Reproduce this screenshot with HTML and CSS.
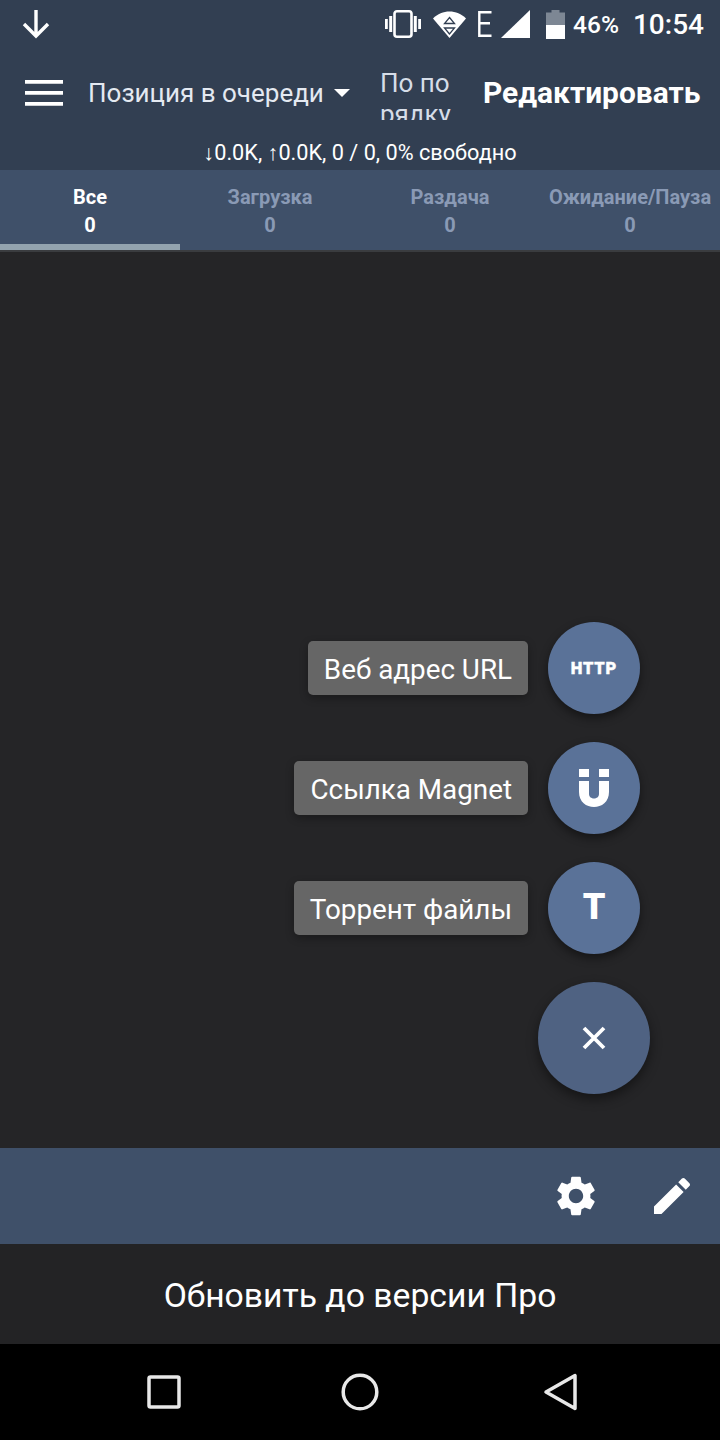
FILE: index.html
```html
<!DOCTYPE html>
<html lang="ru">
<head>
  <meta charset="UTF-8" />
  <meta name="viewport" content="width=device-width, initial-scale=1" />
  <title>Торренты</title>
  <link rel="stylesheet" href="styles.css">
</head>
<body>
  <div class="screen">
    <header class="top">
      <div class="status-bar">
        <svg class="dl-icon" width="32" height="32" viewBox="0 0 32 32"><path d="M16 2V27M4 16L16 28L28 16" fill="none" stroke="#fff" stroke-width="3.400"/></svg>
        <div class="status-right">
          <svg class="st-vibrate" width="36" height="28" viewBox="0 0 36 28"><rect x="9.500" y="1.300" width="17" height="25.400" rx="2.500" fill="none" stroke="#fff" stroke-width="2.600"/><path d="M0 9h2.800v10H0zM4.200 6h3v16h-3zM28.800 6h3v16h-3zM33.200 9H36v10h-2.800z" fill="#fff"/></svg>
          <svg class="st-wifi" width="33" height="28" viewBox="0 0 33 28"><path d="M0 8.500C9 -0.800 24 -0.800 33 8.500L16.500 28Z" fill="#fff"/><path d="M16.500 7.500L21.500 13.500H11.500ZM16.500 24L11.500 18H21.500Z" fill="none" stroke="#323f52" stroke-width="1.300"/></svg>
          <svg class="st-e" width="14" height="26" viewBox="0 0 14 26"><path d="M13.500 1.300H1.300V24.700H13.500M1.300 12.300H12" fill="none" stroke="#fff" stroke-width="2.400"/></svg>
          <svg class="st-signal" width="29" height="28" viewBox="0 0 29 28"><path d="M29 0V28H0Z" fill="#fff"/></svg>
          <svg class="st-battery" width="19" height="29" viewBox="0 0 19 29"><path d="M5.500 0h8v2.500H19V29H0V2.500h5.500z" fill="#7d8794"/><path d="M0 15h19v14H0z" fill="#fff"/></svg>
          <span class="st-percent">46%</span>
          <span class="st-time">10:54</span>
        </div>
      </div>
      <div class="toolbar">
        <svg class="menu-icon" width="38" height="26" viewBox="0 0 38 26"><path d="M0 0h38v3.800H0zM0 11h38v3.800H0zM0 22h38v3.800H0z" fill="#fff"/></svg>
        <div class="sort-select">
          <span>Позиция в очереди</span>
          <i class="caret"></i>
        </div>
        <div class="sort-order">По по рядку</div>
        <div class="edit-btn">Редактировать</div>
      </div>
      <div class="speed-line">↓0.0K, ↑0.0K, 0 / 0, 0% свободно</div>
    </header>

    <nav class="tabs">
      <div class="tab active"><span>Все</span><span>0</span></div>
      <div class="tab"><span>Загрузка</span><span>0</span></div>
      <div class="tab"><span>Раздача</span><span>0</span></div>
      <div class="tab"><span>Ожидание/Пауза</span><span>0</span></div>
    </nav>

    <main class="content">
      <div class="fab-menu">
        <div class="fab-row">
          <div class="fab-label">Веб адрес URL</div>
          <div class="fab"><span class="http-mark">HTTP</span></div>
        </div>
        <div class="fab-row">
          <div class="fab-label">Ссылка Magnet</div>
          <div class="fab">
            <svg width="32" height="38" viewBox="0 0 32 38"><path d="M1 0h10v8H1zM21 0h10v8H21zM1 12h10v13c0 6 10 6 10 0V12h10v11c0 20-30 20-30 0Z" fill="#fff"/></svg>
          </div>
        </div>
        <div class="fab-row">
          <div class="fab-label">Торрент файлы</div>
          <div class="fab"><span class="t-mark">T</span></div>
        </div>
        <div class="fab-row main-row">
          <div class="fab fab-main">
            <svg width="24" height="24" viewBox="0 0 24 24"><path d="M2 2L22 22M22 2L2 22" stroke="#fff" stroke-width="3.800" fill="none"/></svg>
          </div>
        </div>
      </div>
    </main>

    <div class="bottom-bar">
      <svg width="48" height="48" viewBox="0 0 24 24"><path fill="#fff" d="M19.140 12.940c.04-.3.060-.61.060-.94 0-.32-.020-.64-.070-.94l2.030-1.580c.18-.14.230-.41.120-.61l-1.920-3.320c-.12-.22-.37-.29-.59-.22l-2.390.96c-.5-.38-1.030-.7-1.620-.94l-.36-2.540c-.04-.24-.24-.41-.48-.41h-3.840c-.24 0-.43.170-.47.410l-.36 2.540c-.59.240-1.130.570-1.620.94l-2.390-.96c-.22-.08-.47 0-.59.220L2.740 8.870c-.12.210-.08.470.12.610l2.030 1.580c-.05.300-.09.630-.09.940s.02.640.07.940l-2.030 1.580c-.18.140-.23.410-.12.610l1.920 3.320c.12.220.37.290.59.220l2.390-.96c.5.380 1.030.7 1.620.94l.36 2.540c.05.240.24.410.48.410h3.840c.24 0 .44-.170.47-.410l.36-2.540c.59-.240 1.130-.56 1.620-.94l2.390.96c.22.080.47 0 .59-.22l1.920-3.320c.12-.22.070-.47-.12-.61l-2.010-1.580zM12 15.600c-1.980 0-3.600-1.620-3.600-3.600s1.620-3.600 3.600-3.600 3.600 1.620 3.600 3.600-1.620 3.600-3.600 3.600z"/></svg>
      <svg width="48" height="48" viewBox="0 0 24 24"><path fill="#fff" d="M3 17.250V21h3.750L17.810 9.940l-3.750-3.750L3 17.250zM20.710 7.040c.39-.39.390-1.020 0-1.410l-2.340-2.340c-.39-.39-1.020-.39-1.410 0l-1.830 1.830 3.750 3.750 1.830-1.830z"/></svg>
    </div>

    <div class="upgrade">Обновить до версии Про</div>

    <div class="nav-bar">
      <svg width="36" height="36" viewBox="0 0 36 36"><rect x="3" y="3" width="30" height="30" rx="1.500" fill="none" stroke="#e8e8e8" stroke-width="3.500"/></svg>
      <svg width="40" height="40" viewBox="0 0 40 40"><circle cx="20" cy="20" r="16.800" fill="none" stroke="#e8e8e8" stroke-width="3.500"/></svg>
      <svg width="40" height="40" viewBox="0 0 40 40"><path d="M37 3.500V36.500L8 20Z" fill="none" stroke="#e8e8e8" stroke-width="3.500" stroke-linejoin="round"/></svg>
    </div>
  </div>
</body>
</html>
```

FILE: styles.css
```css
* {
  box-sizing: border-box;
}
body {
  margin: 0;
  background: #252527;
  font-family: Roboto, "Noto Sans", sans-serif;
  color: #fff;
}
.screen {
  display: flex;
  flex-direction: column;
  width: 720px;
  height: 1440px;
  overflow: hidden;
}

.top {
  height: 170px;
  background: #323f52;
}
.status-bar {
  display: flex;
  justify-content: space-between;
  align-items: center;
  height: 48px;
  padding: 0 16px 0 20px;
}
.status-right {
  display: flex;
  align-items: center;
}
.st-wifi {
  margin-left: 12px;
}
.st-e {
  margin-left: 12px;
}
.st-signal {
  margin-left: 9px;
}
.st-battery {
  margin-left: 16px;
}
.st-percent {
  margin-left: 8px;
  font-size: 24.500px;
  font-weight: 500;
}
.st-time {
  margin-left: 14px;
  font-size: 28px;
  font-weight: 500;
}

.toolbar {
  display: flex;
  align-items: flex-start;
  height: 74px;
}
.menu-icon {
  margin: 32px 0 0 25px;
  flex-shrink: 0;
}
.sort-select {
  display: flex;
  align-items: center;
  width: 292px;
  height: 34px;
  margin: 28px 0 0 25px;
  font-size: 26px;
  color: #e4e9f1;
}
.caret {
  width: 0;
  height: 0;
  margin-left: 10px;
  border-left: 8px solid transparent;
  border-right: 8px solid transparent;
  border-top: 8px solid #fff;
}
.sort-order {
  width: 76px;
  height: 52px;
  margin-top: 20px;
  overflow: hidden;
  font-size: 26px;
  line-height: 31px;
  color: #d6dde8;
}
.edit-btn {
  margin: 25px 0 0 27px;
  font-size: 29.900px;
  font-weight: 700;
  line-height: 40px;
  white-space: nowrap;
}
.speed-line {
  height: 48px;
  padding-top: 17px;
  font-size: 21.700px;
  line-height: 28px;
  text-align: center;
}

.tabs {
  display: flex;
  height: 82px;
  background: #3f5069;
  border-bottom: 2px solid #3a3c3f;
}
.tab {
  display: flex;
  flex-direction: column;
  align-items: center;
  width: 180px;
  padding-top: 13px;
  font-size: 20px;
  font-weight: 700;
  line-height: 28px;
  color: #8a9ab5;
  white-space: nowrap;
}
.tab.active {
  color: #fff;
  border-bottom: 6px solid #93a3ae;
}

.content {
  position: relative;
  flex: 1;
  background: #252527;
}
.fab-menu {
  position: absolute;
  top: 370px;
  right: 70px;
  display: flex;
  flex-direction: column;
  gap: 28px;
}
.fab-row {
  display: flex;
  justify-content: flex-end;
  align-items: center;
  gap: 20px;
  height: 92px;
  padding-right: 10px;
}
.main-row {
  height: 112px;
  padding-right: 0;
}
.fab-label {
  height: 54px;
  padding: 0 16px;
  background: #666;
  border-radius: 5px;
  box-shadow: 0 3px 8px rgba(0, 0, 0, 0.3);
  font-size: 27.800px;
  line-height: 57px;
  white-space: nowrap;
}
.fab {
  display: flex;
  justify-content: center;
  align-items: center;
  width: 92px;
  height: 92px;
  background: #5a7298;
  border-radius: 50%;
  box-shadow: 0 4px 10px rgba(0, 0, 0, 0.45);
}
.fab-main {
  width: 112px;
  height: 112px;
  background: #4f6282;
  box-shadow: 0 5px 12px rgba(0, 0, 0, 0.45);
}
.http-mark {
  font-size: 16.500px;
  font-weight: 900;
  letter-spacing: 0.800px;
  -webkit-text-stroke: 0.400px #fff;
}
.t-mark {
  font-size: 36px;
  font-weight: 900;
  margin-top: -2px;
}

.bottom-bar {
  display: flex;
  justify-content: flex-end;
  align-items: center;
  gap: 48px;
  height: 96px;
  padding-right: 24px;
  background: #3f5069;
}
.upgrade {
  height: 100px;
  background: #232325;
  font-size: 33.700px;
  line-height: 104px;
  text-align: center;
}
.nav-bar {
  display: flex;
  justify-content: space-between;
  align-items: center;
  height: 96px;
  padding: 0 142px 0 146px;
  background: #000;
}
```
